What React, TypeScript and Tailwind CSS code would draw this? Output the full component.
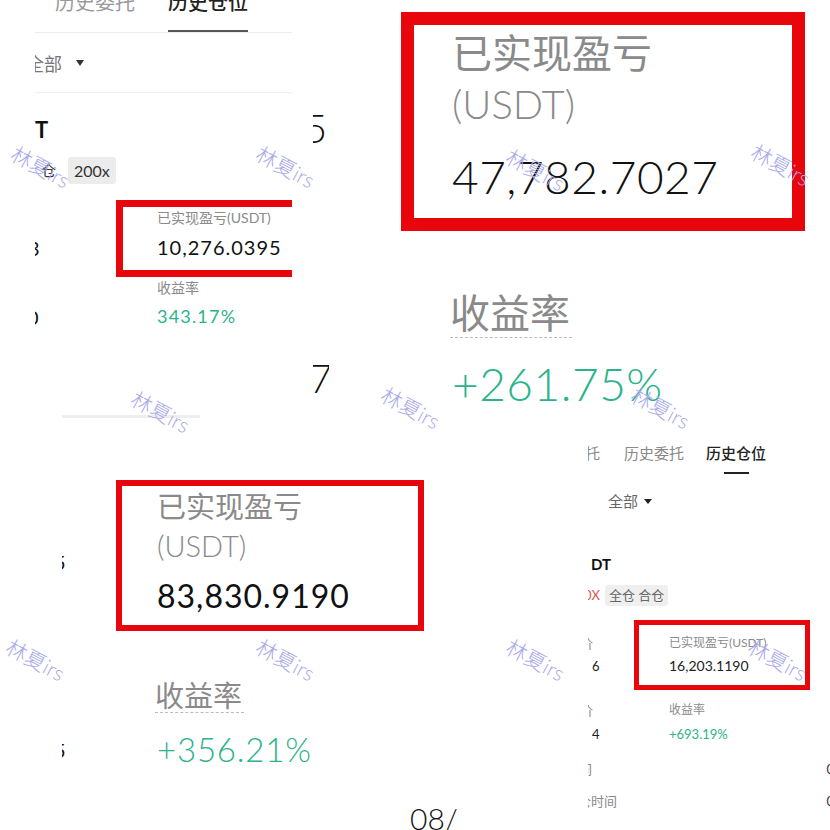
import React from "react";

// watermark centres, as they sit on the collage
const marks: [number, number][] = [
  [45, 167], [290, 167], [540, 170], [785, 165],
  [165, 412], [415, 408], [665, 408],
  [40, 660], [290, 660], [540, 660], [782, 660],
];

function Caret({ size = "sm" }: { size?: "sm" | "xs" }) {
  return size === "sm" ? (
    <span className="inline-block w-0 h-0 border-l-[4px] border-r-[4px] border-t-[6px] border-l-transparent border-r-transparent border-t-[#333]" />
  ) : (
    <span className="inline-block w-0 h-0 border-l-[4px] border-r-[4px] border-t-[5px] border-l-transparent border-r-transparent border-t-[#222]" />
  );
}

export default function App() {
  return (
    <div className="relative w-[830px] h-[830px] overflow-hidden bg-white font-['Lato','Noto_Sans_CJK_SC',sans-serif]">
      {/* top-left piece */}
      <div className="absolute left-0 top-0 w-[292px] h-[420px] overflow-hidden">
        <div className="ml-[35px] -mt-[13px] h-[46px] flex items-end border-b border-[#ececec] text-[20px] font-['Noto_Sans_CJK_SC',sans-serif]">
          <div className="ml-[20px] pb-[20px] leading-[20px] text-[#9a9a9a]">历史委托</div>
          <div className="ml-[33px] pb-[18px] leading-[20px] text-[#222] font-medium border-b-2 border-[#555]">历史仓位</div>
        </div>
        <div className="ml-[35px] h-[60px] flex items-center border-b border-[#f0f0f0] overflow-hidden">
          <span className="-ml-[9px] text-[18px] leading-[22px] text-[#777] font-['Noto_Sans_CJK_SC',sans-serif]">全部</span>
          <span className="ml-[14px] flex"><Caret /></span>
        </div>
        <div className="ml-[35px] overflow-hidden">
          <div className="mt-[26px] h-[22px] leading-[22px] text-[22px] font-bold text-[#111]">T</div>
          <div className="mt-[16px] h-[27px] flex items-center">
            <span className="ml-[6px] text-[15px] text-[#333] font-['Noto_Sans_CJK_SC',sans-serif]">仓</span>
            <span className="ml-[12px] px-[6px] h-[27px] flex items-center rounded-[3px] bg-[#ececec] text-[16px] text-[#333]">200x</span>
          </div>
          <div className="mt-[16px] flex">
            <div className="w-[81px] flex flex-col text-[20px] leading-[24px] text-[#111]">
              <div className="mt-[36px] -ml-[7px]">3</div>
              <div className="mt-[45px] -ml-[8px]">0</div>
            </div>
            <div className="flex-1">
              <div className="h-[77px] border-[7px] border-r-0 border-[#e8060c] pl-[34px] pt-[2px]">
                <div className="text-[14px] leading-[18px] text-[#8a8a8a]">已实现盈亏(USDT)</div>
                <div className="mt-[8px] text-[20px] leading-[24px] text-[#111] tracking-[1px]">10,276.0395</div>
              </div>
              <div className="ml-[41px] mt-[2px] text-[14px] leading-[18px] text-[#8a8a8a]">收益率</div>
              <div className="ml-[41px] mt-[8px] text-[18px] leading-[22px] text-[#2bb38a] tracking-[1.2px]">343.17%</div>
            </div>
          </div>
        </div>
      </div>

      {/* strip of clipped digits */}
      <div className="absolute left-[313px] top-0 w-[16px] h-[420px] overflow-hidden text-[40px] leading-[44px] text-[#111] font-light">
        <div className="mt-[106px] -ml-[9px]">5</div>
        <div className="mt-[206px] -ml-[4px]">7</div>
      </div>

      {/* top-right piece */}
      <div className="absolute left-[400px] top-0 w-[430px] h-[430px]">
        <div className="ml-[1px] mt-[12px] w-[404px] h-[219px] border-[13px] border-[#e8060c] pl-[38px] pt-[3px]">
          <div className="text-[40px] leading-[51px] text-[#8a8a8a]">已实现盈亏</div>
          <div className="text-[40px] leading-[51px] text-[#8a8a8a] font-light">(USDT)</div>
          <div className="mt-[19px] text-[46px] leading-[56px] text-[#111] font-light tracking-[0.5px]">47,782.7027</div>
        </div>
        <div className="ml-[50px] mt-[56px] inline-block pb-[2px] pr-[2px] border-b border-dashed border-[#bbb] text-[40px] leading-[48px] text-[#8a8a8a] font-['Noto_Sans_CJK_SC',sans-serif]">收益率</div>
        <div className="ml-[52px] mt-[18px] text-[46px] leading-[56px] text-[#2bb38a] font-light tracking-[0.5px]">+261.75%</div>
      </div>

      {/* bottom-left piece */}
      <div className="absolute left-[62px] top-[415px] w-[368px] h-[415px] overflow-hidden">
        <div className="h-[3px] w-[138px] bg-[#eeeeee]" />
        <div className="flex mt-[62px]">
          <div className="w-[54px] flex flex-col text-[20px] leading-[24px] text-[#111]">
            <div className="mt-[70px] -ml-[8px]">5</div>
            <div className="mt-[164px] -ml-[8px]">5</div>
          </div>
          <div className="flex-1">
            <div className="w-[308px] h-[151px] border-[6px] border-[#e8060c] pl-[35px] pt-[1px]">
              <div className="text-[29px] leading-[39px] text-[#8a8a8a]">已实现盈亏</div>
              <div className="text-[29px] leading-[39px] text-[#8a8a8a] font-light">(USDT)</div>
              <div className="mt-[11px] text-[32px] leading-[40px] text-[#111] tracking-[1px]">83,830.9190</div>
            </div>
            <div className="ml-[39px] mt-[45px] inline-block pr-[2px] border-b border-dashed border-[#bbb] text-[29px] leading-[36px] text-[#8a8a8a] font-['Noto_Sans_CJK_SC',sans-serif]">收益率</div>
            <div className="ml-[41px] mt-[16px] text-[33px] leading-[40px] text-[#2bb38a] font-light tracking-[0.8px]">+356.21%</div>
          </div>
        </div>
      </div>

      {/* bottom-right piece */}
      <div className="absolute left-[588px] top-[430px] w-[242px] h-[400px] overflow-hidden font-['Lato','Noto_Sans_CJK_SC',sans-serif]">
        <div className="mt-[14px] flex items-start text-[15px] leading-[18px]">
          <span className="-ml-[48px] text-[#888]">当前委托</span>
          <span className="ml-[24px] text-[#888]">历史委托</span>
          <div className="ml-[22px] flex flex-col">
            <span className="text-[#222] font-medium">历史仓位</span>
            <span className="mx-auto mt-[10px] w-[25px] h-[2px] bg-[#222]" />
          </div>
        </div>
        <div className="ml-[20px] mt-[18px] flex items-center text-[15px] leading-[18px] text-[#666]">
          <span>全部</span>
          <span className="ml-[6px] flex"><Caret size="xs" /></span>
        </div>
        <div className="ml-[3px] mt-[45px] text-[15px] leading-[18px] font-bold text-[#111]">DT</div>
        <div className="mt-[12px] h-[21px] flex items-center text-[13px]">
          <span className="-ml-[4px] text-[#d9534f]">0X</span>
          <span className="ml-[5px] px-[4px] h-[21px] flex items-center rounded-[3px] bg-[#efefef] text-[#666]">全仓 合仓</span>
        </div>
        <div className="mt-[14px] flex">
          <div className="w-[46px] flex flex-col text-[13px] leading-[16px] text-[#222]">
            <div className="mt-[15px] -ml-[8px] text-[#888]">价</div>
            <div className="mt-[7px] ml-[4px]">6</div>
            <div className="mt-[28px] -ml-[8px] text-[#888]">价</div>
            <div className="mt-[8px] ml-[4px]">4</div>
          </div>
          <div className="flex-1">
            <div className="w-[176px] h-[70px] border-[5px] border-[#e8060c] pl-[30px] pt-[10px]">
              <div className="text-[12px] leading-[16px] text-[#8a8a8a]">已实现盈亏(USDT)</div>
              <div className="mt-[6px] text-[14px] leading-[18px] text-[#222]">16,203.1190</div>
            </div>
            <div className="ml-[35px] mt-[12px] text-[12px] leading-[16px] text-[#8a8a8a]">收益率</div>
            <div className="ml-[35px] mt-[8px] text-[13px] leading-[16px] text-[#2bb38a]">+693.19%</div>
          </div>
        </div>
        <div className="mt-[19px] flex justify-between text-[13px] leading-[16px] text-[#888]">
          <span className="-ml-[9px]">间</span>
          <span className="-mr-[4px] text-[#333]">0</span>
        </div>
        <div className="mt-[16px] flex justify-between text-[13px] leading-[16px] text-[#888]">
          <span className="-ml-[10px]">仓时间</span>
          <span className="-mr-[4px] text-[#333]">0</span>
        </div>
      </div>

      {/* page number fragment */}
      <div className="absolute left-[410px] top-[800px] text-[30px] leading-[36px] text-[#111] font-light">08/</div>

      {/* watermarks */}
      {marks.map(([x, y], i) => (
        <div
          key={i}
          className="absolute z-10 pointer-events-none whitespace-nowrap rotate-[28deg] text-[21px] leading-[24px] font-light text-[#aaaaea]"
          style={{ left: x - 36, top: y - 12 }}
        >
          林夏irs
        </div>
      ))}
    </div>
  );
}
